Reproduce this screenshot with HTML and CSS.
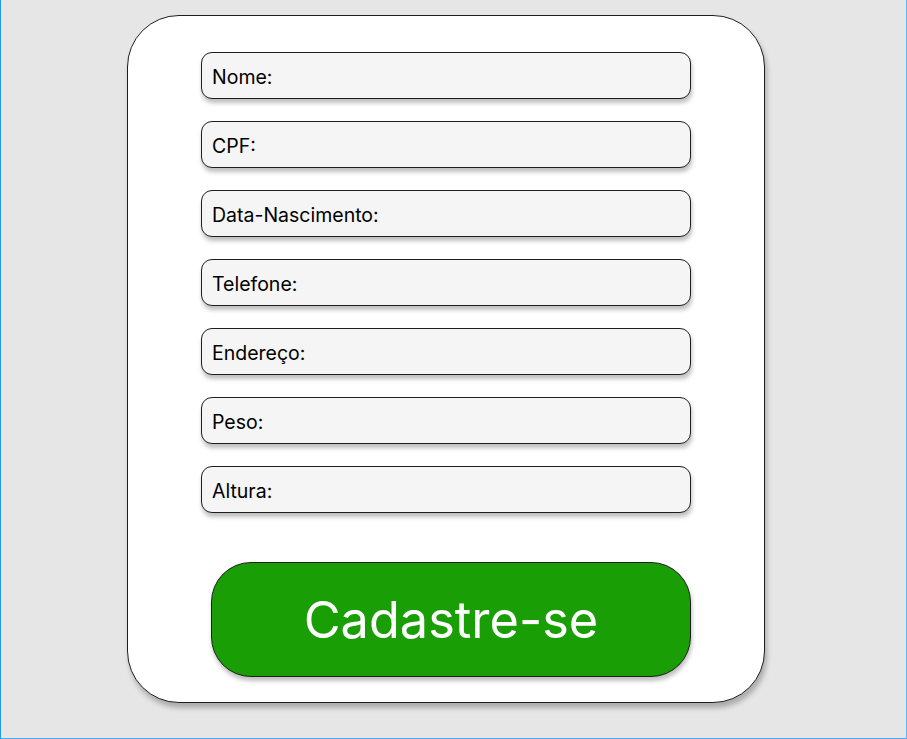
FILE: index.html
```html
<!DOCTYPE html>
<html lang="pt-BR">
<head>
<meta charset="utf-8">
<title>Cadastro</title>
<link rel="stylesheet" href="styles.css">
</head>
<body>
<div class="frame">
  <form class="card">
    <div class="fields">
      <div class="field">Nome:</div>
      <div class="field">CPF:</div>
      <div class="field">Data-Nascimento:</div>
      <div class="field">Telefone:</div>
      <div class="field">Endereço:</div>
      <div class="field">Peso:</div>
      <div class="field">Altura:</div>
    </div>
    <button type="button" class="submit">Cadastre-se</button>
  </form>
</div>
</body>
</html>
```
FILE: styles.css
```css
* { box-sizing: border-box; }
html, body { margin: 0; padding: 0; }
body {
  background: #e6e6e6;
  font-family: Inter, "Noto Sans", sans-serif;
}
.frame {
  width: 907px;
  height: 739px;
  border-left: 1px solid #2196f3;
  border-right: 1px solid #64b5f6;
  border-bottom: 1px solid #4aa8f5;
  padding-top: 15px;
  padding-left: 126px;
}
.card {
  width: 638px;
  height: 688px;
  background: #ffffff;
  border: 1.5px solid #1e1e1e;
  border-radius: 52px;
  box-shadow: 2px 5px 5px rgba(0,0,0,0.25);
  padding: 36px 72px 0 73px;
  display: flex;
  flex-direction: column;
}
.fields {
  display: flex;
  flex-direction: column;
  gap: 22px;
}
.field {
  width: 490px;
  height: 47px;
  background: #f5f5f5;
  border: 1.5px solid #1e1e1e;
  border-radius: 11px;
  box-shadow: 1px 4px 4px rgba(0,0,0,0.25);
  padding-left: 10px;
  display: flex;
  align-items: center;
  font-size: 19.5px;
  color: #000;
  padding-top: 2px;
}
.submit {
  margin-top: 49px;
  margin-left: 10px;
  width: 480px;
  height: 115px;
  background: #1a9e06;
  border: 1.5px solid #1e1e1e;
  border-radius: 40px;
  box-shadow: 1px 4px 4px rgba(0,0,0,0.25);
  color: #ffffff;
  font-family: Inter, "Noto Sans", sans-serif;
  font-size: 50.5px;
  font-weight: 400;
  padding: 0;
  cursor: pointer;
}
```
